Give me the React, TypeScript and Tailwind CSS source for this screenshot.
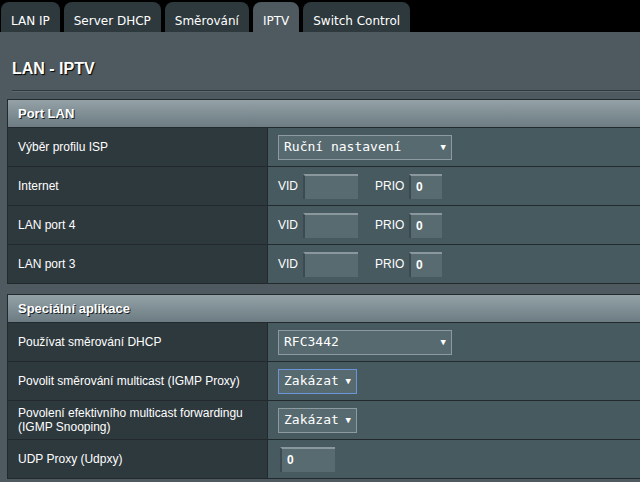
import React from 'react';

const tabs = ['LAN IP', 'Server DHCP', 'Směrování', 'IPTV', 'Switch Control'];

const Select = ({ value, wide, focus }: { value: string; wide?: boolean; focus?: boolean }) => (
  <div
    className={`flex items-center justify-between h-[25px] px-[5px] bg-[#576a70] text-white text-[13px] font-['DejaVu_Sans_Mono',monospace] border ${
      focus ? 'border-[#6b95d6]' : 'border-[#8d9ba0]'
    } ${wide ? 'w-[174px]' : 'w-[79px]'}`}
  >
    <span>{value}</span>
    <span className="text-[9px] leading-none">▼</span>
  </div>
);

const Input = ({ value, w }: { value?: string; w: string }) => (
  <div
    className={`h-[25px] ${w} bg-[#586b71] border-t-2 border-l-2 border-t-[#8a989d] border-l-[#3d4a4f] pl-[5px] flex items-center text-white text-[12px] font-bold`}
  >
    {value}
  </div>
);

const Row = ({ label, children }: { label: React.ReactNode; children: React.ReactNode }) => (
  <div className="flex h-[39px] border-b border-[#222a2d]">
    <div className="w-[260px] shrink-0 bg-[#2e393e] border-r border-[#222a2d] pl-[10px] flex items-center text-white text-[12px] leading-[14px]">
      {label}
    </div>
    <div className="flex-1 bg-[#475a60] pl-[10px] flex items-center">{children}</div>
  </div>
);

const VlanRow = ({ label }: { label: string }) => (
  <Row label={label}>
    <span className="text-white text-[12px] w-[25px]">VID</span>
    <Input w="w-[55px]" />
    <span className="text-white text-[12px] ml-[17px] w-[34px]">PRIO</span>
    <Input w="w-[33px]" value="0" />
  </Row>
);

const Header = ({ title }: { title: string }) => (
  <div className="h-[28px] border-b border-[#222a2d] bg-gradient-to-b from-[#94a2a7] to-[#6c7c82] pl-[10px] flex items-center text-white text-[13px] font-bold [text-shadow:1px_1px_0_#1b2326]">
    {title}
  </div>
);

export default function App() {
  return (
    <div className="w-[640px] h-[482px] overflow-hidden bg-[#4e5a60] font-['Liberation_Sans',Arial,sans-serif]">
      <div className="h-[32px] bg-black flex items-end pl-[1px] gap-[4px]">
        {tabs.map((t) => (
          <div
            key={t}
            className={`h-[30px] rounded-t-[8px] px-[10px] flex items-center pt-[8px] text-[12px] text-white font-['DejaVu_Sans',sans-serif] ${
              t === 'IPTV' ? 'bg-[#4e5a60]' : 'bg-[#2e393e]'
            }`}
          >
            {t}
          </div>
        ))}
      </div>

      <div className="pl-[12px] pt-[27px] h-[58px]">
        <h1 className="text-white text-[16px] font-bold leading-[20px] [text-shadow:1px_1px_1px_#000]">LAN - IPTV</h1>
      </div>
      <div className="ml-[12px] border-t border-b border-t-[#2f393d] border-b-[#5c696f]" />

      <div className="ml-[7px] mt-[7px] w-[650px] border-l border-t border-[#222a2d]">
        <Header title="Port LAN" />
        <Row label="Výběr profilu ISP">
          <Select value="Ruční nastavení" wide />
        </Row>
        <VlanRow label="Internet" />
        <VlanRow label="LAN port 4" />
        <VlanRow label="LAN port 3" />
      </div>

      <div className="ml-[7px] mt-[10px] w-[650px] border-l border-t border-[#222a2d]">
        <Header title="Speciální aplikace" />
        <Row label="Používat směrování DHCP">
          <Select value="RFC3442" wide />
        </Row>
        <Row label="Povolit směrování multicast (IGMP Proxy)">
          <Select value="Zakázat" focus />
        </Row>
        <Row
          label={
            <span>
              Povolení efektivního multicast forwardingu
              <br />
              (IGMP Snooping)
            </span>
          }
        >
          <Select value="Zakázat" />
        </Row>
        <Row label="UDP Proxy (Udpxy)">
          <div className="ml-[2px]">
            <Input w="w-[55px]" value="0" />
          </div>
        </Row>
      </div>
    </div>
  );
}
